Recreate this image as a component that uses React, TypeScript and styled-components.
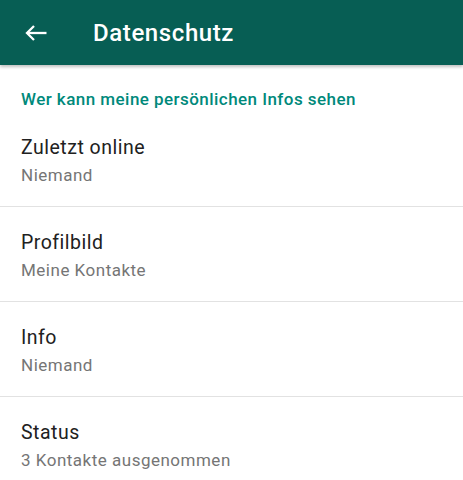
import styled, { createGlobalStyle } from 'styled-components';

interface PrivacyItem {
  title: string;
  value: string;
}

const items: PrivacyItem[] = [
  { title: 'Zuletzt online', value: 'Niemand' },
  { title: 'Profilbild', value: 'Meine Kontakte' },
  { title: 'Info', value: 'Niemand' },
  { title: 'Status', value: '3 Kontakte ausgenommen' },
];

const GlobalStyle = createGlobalStyle`
  html, body {
    margin: 0;
    padding: 0;
    background: #ffffff;
    font-family: Roboto, 'Noto Sans', 'Liberation Sans', sans-serif;
    -webkit-font-smoothing: antialiased;
  }
`;

const Screen = styled.div`
  width: 463px;
  height: 480px;
  overflow: hidden;
  background: #ffffff;
`;

const AppBar = styled.header`
  position: relative;
  z-index: 1;
  height: 65px;
  display: flex;
  align-items: center;
  background: #075e54;
  color: #ffffff;
  box-shadow: 0 2px 3px rgba(0, 0, 0, 0.25);
`;

const BackButton = styled.button`
  width: 72px;
  height: 65px;
  display: flex;
  align-items: center;
  padding: 1px 0 0 25px;
  background: none;
  border: none;
  color: inherit;
  cursor: pointer;
`;

const Title = styled.h1`
  margin: 0 0 0 21px;
  font-size: 24px;
  font-weight: 500;
  letter-spacing: 0.6px;
`;

const SectionHeader = styled.div`
  padding: 24px 21px 3px;
  font-size: 17px;
  line-height: 20px;
  font-weight: 500;
  letter-spacing: 0.45px;
  color: #00897b;
`;

const List = styled.ul`
  list-style: none;
  margin: 0;
  padding: 0;
`;

const Row = styled.li`
  padding: 23px 21px 20px;
  border-top: 1px solid #e2e2e2;

  &:first-child {
    border-top: none;
  }
`;

const RowTitle = styled.div`
  font-size: 19.5px;
  line-height: 26px;
  letter-spacing: 0.5px;
  color: #212121;
`;

const RowValue = styled.div`
  margin-top: 3px;
  font-size: 17px;
  line-height: 22px;
  letter-spacing: 0.5px;
  color: #757575;
`;

const BackArrow = () => (
  <svg width="22" height="16" viewBox="0 0 22 16" fill="none" stroke="currentColor" strokeWidth="2.3">
    <path d="M21.5 8H2" />
    <path d="M9 1L2 8l7 7" />
  </svg>
);

export default function App() {
  return (
    <Screen>
      <GlobalStyle />
      <AppBar>
        <BackButton aria-label="Zurück">
          <BackArrow />
        </BackButton>
        <Title>Datenschutz</Title>
      </AppBar>
      <SectionHeader>Wer kann meine persönlichen Infos sehen</SectionHeader>
      <List>
        {items.map((item) => (
          <Row key={item.title}>
            <RowTitle>{item.title}</RowTitle>
            <RowValue>{item.value}</RowValue>
          </Row>
        ))}
      </List>
    </Screen>
  );
}
